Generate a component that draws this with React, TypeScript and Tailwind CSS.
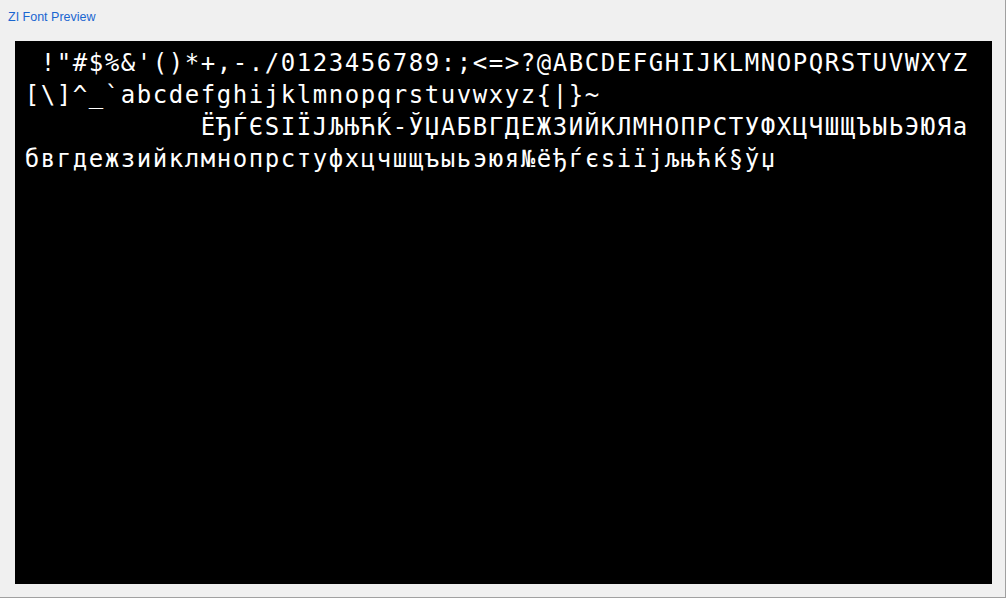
const lines = [
  ' !"#$%&\'()*+,-./0123456789:;<=>?@ABCDEFGHIJKLMNOPQRSTUVWXYZ',
  '[\\]^_`abcdefghijklmnopqrstuvwxyz{|}~',
  '           ЁЂЃЄЅІЇЈЉЊЋЌ-ЎЏАБВГДЕЖЗИЙКЛМНОПРСТУФХЦЧШЩЪЫЬЭЮЯа',
  'бвгдежзийклмнопрстуфхцчшщъыьэюя№ёђѓєѕіїјљњћќ§ўџ',
];

function GlyphRow({ text }: { text: string }) {
  return (
    <div className="flex h-8 leading-8">
      {Array.from(text).map((ch, i) => (
        <span key={i} className="w-4 shrink-0 text-center whitespace-pre">
          {ch}
        </span>
      ))}
    </div>
  );
}

export default function App() {
  return (
    <div className="w-[1006px] h-[598px] bg-[#f0f0f0] border-r border-b border-[#a0a0a0] flex flex-col">
      <div className="h-[41px] pl-2 pt-[9px] text-[12.5px] leading-[16px] text-[#1a66d0] font-['Liberation_Sans',sans-serif]">
        ZI Font Preview
      </div>
      <div className="ml-[15px] w-[977px] h-[543px] bg-black pl-[9px] pt-[6px] text-white text-[24px] font-['DejaVu_Sans_Mono',monospace]">
        {lines.map((l, i) => (
          <GlyphRow key={i} text={l} />
        ))}
      </div>
    </div>
  );
}
